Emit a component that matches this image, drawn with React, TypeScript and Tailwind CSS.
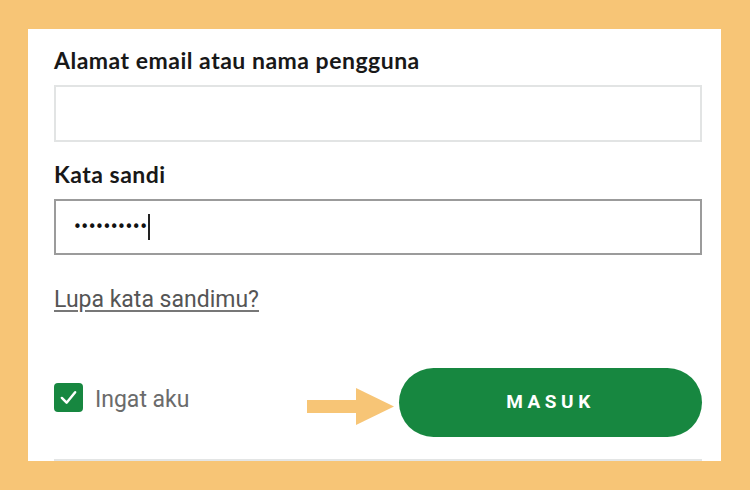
import { useState } from "react";

const GREEN = "bg-[#178740]";

function Arrow() {
  return (
    <svg width="88" height="38" viewBox="0 0 88 38" className="mt-2 shrink-0">
      <rect x="0" y="12" width="51" height="13" fill="#f7c576" />
      <polygon points="49,0 87,18.5 49,37" fill="#f7c576" />
    </svg>
  );
}

export default function App() {
  const [email, setEmail] = useState("");
  const [ingat, setIngat] = useState(true);

  return (
    <div className="w-[750px] h-[490px] bg-[#f7c576] pt-[29px] pl-[28px] overflow-hidden">
      <div className="w-[693px] h-[432px] bg-white pt-[17px] pl-[26px] pr-[19px] overflow-hidden font-['Lato',sans-serif]">
        <label className="block text-[23px] leading-[28px] tracking-[0.5px] font-bold text-[#181818]">
          Alamat email atau nama pengguna
        </label>
        <input
          value={email}
          onChange={(e) => setEmail(e.target.value)}
          className="mt-[11px] block w-full h-[57px] border-2 border-[#e2e4e4] outline-none px-4"
        />

        <label className="mt-[18px] block text-[23px] leading-[28px] tracking-[0.5px] font-bold text-[#181818]">
          Kata sandi
        </label>
        <div className="mt-[11px] h-[56px] border-2 border-[#9b9b9b] flex items-center pl-[17px]">
          <span className="text-[#111] text-[15px] tracking-[-1.5px] font-['DejaVu_Sans',sans-serif] leading-none">
            ••••••••••
          </span>
          <span className="ml-[2px] w-[2px] h-[26px] bg-[#222]" />
        </div>

        <a
          href="#"
          className="mt-[31px] block w-fit text-[23px] leading-[28px] text-[#555] underline underline-offset-[3px] decoration-[#777] font-['Roboto',sans-serif]"
        >
          Lupa kata sandimu?
        </a>

        <div className="mt-[54px] flex items-center justify-between">
          <label className="mb-1 flex items-center gap-[12px] cursor-pointer">
            <button
              onClick={() => setIngat(!ingat)}
              className={`mb-[6px] w-[29px] h-[29px] rounded-[4px] flex items-center justify-center ${ingat ? GREEN : "border-2 border-gray-400"}`}
            >
              {ingat && (
                <svg width="19" height="19" viewBox="0 0 20 20" fill="none">
                  <path d="M3 10.5 L8 15.5 L17 4.5" stroke="white" strokeWidth="2.6" strokeLinecap="round" strokeLinejoin="round" />
                </svg>
              )}
            </button>
            <span className="text-[23px] text-[#6b6b6b] font-['Roboto',sans-serif]">Ingat aku</span>
          </label>

          <div className="flex items-center gap-1">
            <Arrow />
            <button className={`w-[303px] h-[69px] rounded-full ${GREEN} text-white text-[19px] font-bold tracking-[0.24em] font-['Roboto',sans-serif]`}>
              MASUK
            </button>
          </div>
        </div>

        <div className="mt-[22px] h-[2px] bg-[#e3e5e5]" />
      </div>
    </div>
  );
}
